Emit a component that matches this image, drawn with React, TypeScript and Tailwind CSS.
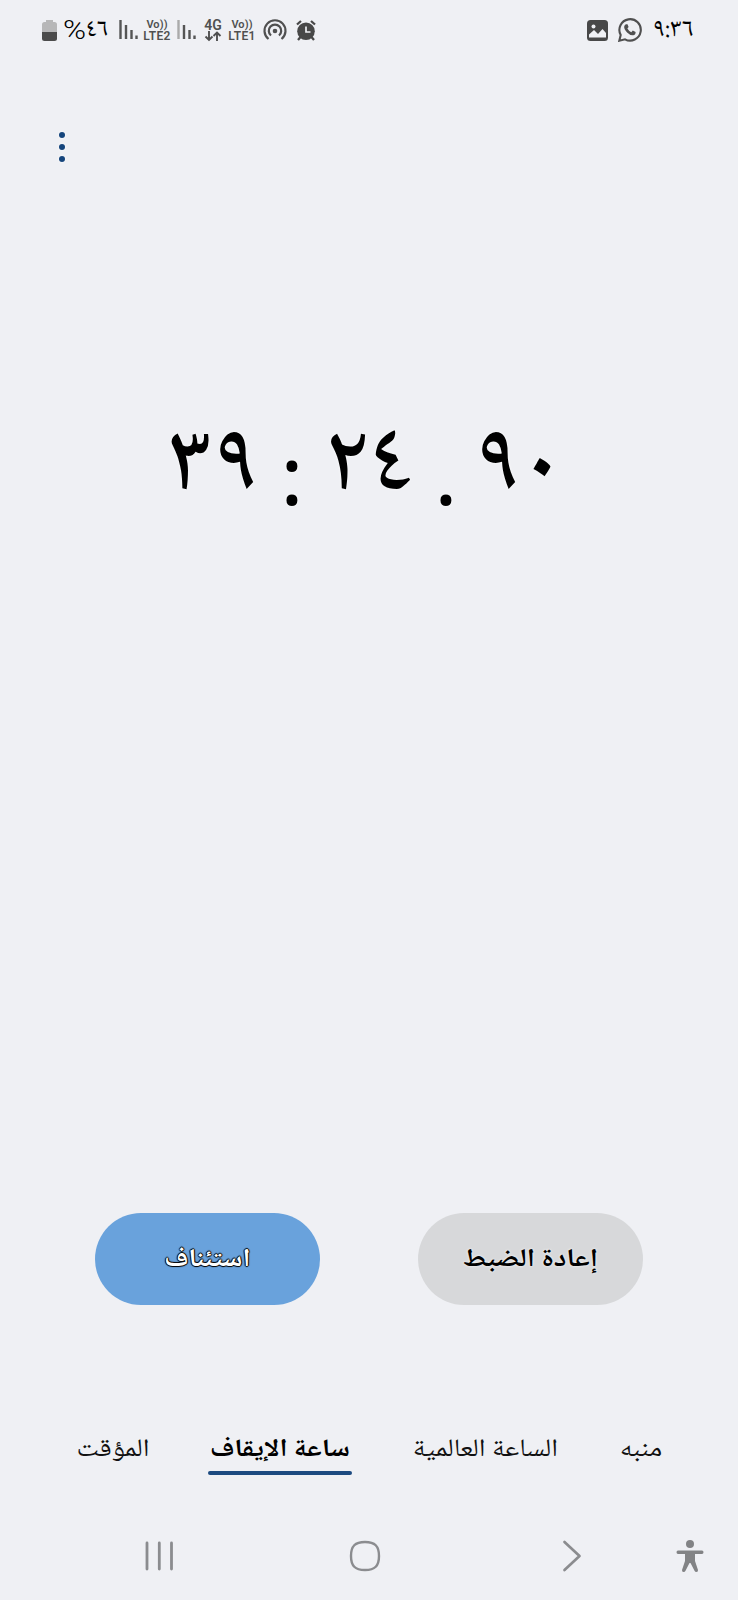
import type { ReactNode } from 'react';

const arabicFont = "font-['Noto_Naskh_Arabic','Noto_Sans_Arabic','Noto_Sans','DejaVu_Sans',sans-serif]";

// شريط الإشارة
const SignalBars = ({ dimFirst = false }: { dimFirst?: boolean }) => (
  <svg viewBox="0 0 20 22" className="h-[22px] w-5 shrink-0" fill="none" stroke="#555" strokeWidth="2.4">
    <path d="M1.5 1v19" stroke={dimFirst ? '#aaa' : '#555'} />
    <path d="M7 6v14M12.5 11v9M17.5 16.5v3.5" />
  </svg>
);

const VoLte = ({ line }: { line: string }) => (
  <div className="w-7 shrink-0 text-center font-['Roboto',sans-serif] font-semibold text-[#505050]">
    <div className="text-[11px] leading-[11px] tracking-[0.1px] whitespace-nowrap">Vo))</div>
    <div className="text-[12px] leading-[12px] tracking-[0.3px]">{line}</div>
  </div>
);

// شريط الحالة
const StatusBar = () => (
  <header className="flex h-[60px] items-center pl-[42px] pr-11">
    <svg viewBox="0 0 15 21" className="h-[21px] w-[15px] shrink-0">
      <path d="M4 0h7v2h1.500q2.500 0 2.500 2.500V12H0V4.500Q0 2 2.500 2H4z" fill="#b7b7b8" />
      <path d="M0 12h15v6.500q0 2.500-2.500 2.500h-10Q0 21 0 18.500z" fill="#4b4b4b" />
    </svg>
    <div className="ml-1.5 flex w-[45px] shrink-0 items-center text-black">
      <span className="inline-block w-[22px] origin-left scale-x-120 font-['Roboto',sans-serif] text-[26px] leading-none font-light">%</span>
      <span className={`${arabicFont} ml-px text-[25px] leading-none`}>٤٦</span>
    </div>
    <div className="ml-[11px] flex items-center">
      <SignalBars />
      <div className="ml-1"><VoLte line="LTE2" /></div>
      <div className="ml-[6px]"><SignalBars dimFirst /></div>
      <div className="ml-[6px] flex w-5 flex-col items-center">
        <span className="font-['Roboto',sans-serif] text-[14px] leading-[12px] font-semibold text-[#505050]">4G</span>
        <svg viewBox="0 0 18 11" className="h-[11px] w-[18px]" fill="none" stroke="#505050" strokeWidth="1.900">
          <path d="M5 0v9M1.500 5.500L5 9l3.500-3.500M13 10V1.500M9.500 5L13 1.500l3.500 3.500" />
        </svg>
      </div>
      <div className="ml-[5px]"><VoLte line="LTE1" /></div>
      <svg viewBox="0 0 24 22" className="ml-[7px] h-[22px] w-6" fill="none" stroke="#505050" strokeWidth="2.2">
        <path d="M5.500 20A10.500 10.500 0 1 1 18.500 20" />
        <path d="M8 16.500A6.200 6.200 0 1 1 16 16.500" />
        <circle cx="12" cy="12" r="2.300" fill="#505050" stroke="none" />
      </svg>
      <svg viewBox="0 0 20 21" className="ml-[9px] h-[21px] w-5" fill="none">
        <circle cx="10" cy="11.300" r="8.800" fill="#484848" />
        <path d="M1 4.500L5 1M19 4.500L15 1M4.500 17L2 20M15.500 17l2.500 3" stroke="#484848" strokeWidth="2.300" />
        <path d="M10 6.500V12h4.500" stroke="#eff0f4" strokeWidth="1.700" />
      </svg>
    </div>
    <div className="ml-auto flex items-center">
      <svg viewBox="0 0 21 21" className="h-[21px] w-[21px]">
        <rect width="21" height="21" rx="3.500" fill="#484848" />
        <circle cx="6.500" cy="6.500" r="2" fill="#eff0f4" />
        <path d="M2 14.500l5-4.500 4 4 4.500-5L19 13v4.500H2z" fill="#eff0f4" />
      </svg>
      <svg viewBox="0 0 24 24" className="ml-[10px] h-6 w-6" fill="none" stroke="#505050" strokeWidth="2.100">
        <path d="M1.300 22.700l1.400-5.700A10.700 10.700 0 1 1 7 21.300z" />
        <path d="M8 6.200l1.500.1 1.100 2.700-1.200 1.600q1.300 2.500 3.900 3.700l1.500-1.700 2.800 1.300q.2 2.900-2.500 3.300-3 .3-6-2.800-3.300-3.500-2.900-6 .4-1.700 1.800-2.200z" fill="#505050" stroke="none" />
      </svg>
      <span dir="ltr" className={`${arabicFont} ml-[11px] w-[41px] text-[26px] leading-none whitespace-nowrap text-black`}>٩:٣٦</span>
    </div>
  </header>
);

const Digit = ({ className, children }: { className: string; children: ReactNode }) => (
  <span className={`flex shrink-0 justify-center ${className}`}>{children}</span>
);

const Separator = ({ className, children }: { className: string; children: ReactNode }) => (
  <span className={`flex w-3 shrink-0 justify-center pt-[23px] font-['Noto_Sans_Arabic','Noto_Sans',sans-serif] text-[80px] font-medium ${className}`}>
    {children}
  </span>
);

// عرض الوقت
const Stopwatch = () => (
  <div dir="ltr" className={`${arabicFont} flex h-[110px] items-center pl-[171px] text-[96px] leading-none font-medium text-black [text-shadow:0_0_3px_#fff]`}>
    <Digit className="w-[38px]">٣</Digit>
    <Digit className="ml-[10px] w-[33px]">٩</Digit>
    <Separator className="ml-[34px]">:</Separator>
    <Digit className="ml-[34px] w-[31px]">٢</Digit>
    <Digit className="ml-[12px] w-[31px]">٤</Digit>
    <Separator className="ml-[34px]">.</Separator>
    <Digit className="ml-[29px] w-[33px]">٩</Digit>
    <Digit className="ml-[18px] w-[18px]">٠</Digit>
  </div>
);

const tabs = [
  { label: 'المؤقت', className: 'ml-[77px] w-[72px]' },
  { label: 'ساعة الإيقاف', className: 'ml-[59px] w-[144px]', active: true },
  { label: 'الساعة العالمية', className: 'ml-[60px] w-[147px]' },
  { label: 'منبه', className: 'ml-[61px] w-[42px]' },
];

export default function App() {
  return (
    <div dir="ltr" className="flex h-[1600px] w-[738px] flex-col overflow-hidden bg-[#eff0f4]">
      <StatusBar />

      {/* قائمة الخيارات */}
      <div className="mt-[72px] ml-[58px] flex w-2 flex-col items-center gap-1.5">
        <i className="h-1.5 w-1.5 rounded-full bg-[#15457c] shadow-[0_0_3px_white]" />
        <i className="h-1.5 w-1.5 rounded-full bg-[#15457c] shadow-[0_0_3px_white]" />
        <i className="h-1.5 w-1.5 rounded-full bg-[#15457c] shadow-[0_0_3px_white]" />
      </div>

      <div className="mt-[251px]">
        <Stopwatch />
      </div>

      {/* أزرار التحكم */}
      <div dir="ltr" className={`${arabicFont} mt-[690px] flex gap-[98px] pl-[95px] text-[29px] font-bold`}>
        <button className="flex h-[92px] w-[225px] items-center justify-center rounded-full bg-[#69a2dc] text-white [text-shadow:1px_0_1px_#000,-1px_0_1px_#000,0_1px_1px_#000,0_-1px_1px_#000]">
          <span className="inline-block scale-x-97 scale-y-88 pt-1">استئناف</span>
        </button>
        <button className="flex h-[92px] w-[225px] items-center justify-center rounded-full bg-[#d7d8da] text-black [text-shadow:0_0_3px_#fff]">
          <span className="inline-block scale-y-88 pt-1">إعادة الضبط</span>
        </button>
      </div>

      {/* علامات التبويب */}
      <nav className={`${arabicFont} mt-[117px] flex text-[28.500px] leading-[58px] text-[#111]`}>
        {tabs.map((tab) => (
          <div key={tab.label} className={`${tab.className} flex shrink-0 flex-col items-center`}>
            <span dir="rtl" className={`h-[49px] scale-y-88 whitespace-nowrap ${tab.active ? 'font-bold text-black' : ''}`}>{tab.label}</span>
            {tab.active && <span className="h-1 w-full rounded-sm bg-[#1c4a80]" />}
          </div>
        ))}
      </nav>

      {/* شريط التنقل */}
      <footer className="mt-[64px] flex h-[34px] items-center">
        <svg viewBox="0 0 30 30" className="ml-[144px] h-[30px] w-[30px]" stroke="#8b8c8f" strokeWidth="2.800" strokeLinecap="round">
          <path d="M3 2v26M15.300 2v26M27.500 2v26" />
        </svg>
        <svg viewBox="0 0 32 32" className="ml-[175px] h-8 w-8" fill="none" stroke="#8b8c8f" strokeWidth="2.400">
          <path d="M16 2C26 2 30 6 30 16s-4 14-14 14S2 26 2 16 6 2 16 2z" />
        </svg>
        <svg viewBox="0 0 20 32" className="ml-[181px] h-8 w-5" fill="none" stroke="#8b8c8f" strokeWidth="2.700" strokeLinecap="round" strokeLinejoin="round">
          <path d="M2.500 2l15 14-15 14" />
        </svg>
        <svg viewBox="0 0 28 34" className="ml-[94px] h-[34px] w-7" fill="#828385">
          <circle cx="14" cy="5" r="4" />
          <path d="M2 11.500h24q1.500.2 1.500 1.700T26 15h-7v7l3 9q.2 1.800-1.500 2-1.500 0-2-1.200L14.500 24h-1L9.500 31.800q-.6 1.300-2 1.200Q5.800 32.800 6 31l3-9v-7H2q-1.500-.2-1.500-1.700T2 11.500z" />
        </svg>
      </footer>
    </div>
  );
}
